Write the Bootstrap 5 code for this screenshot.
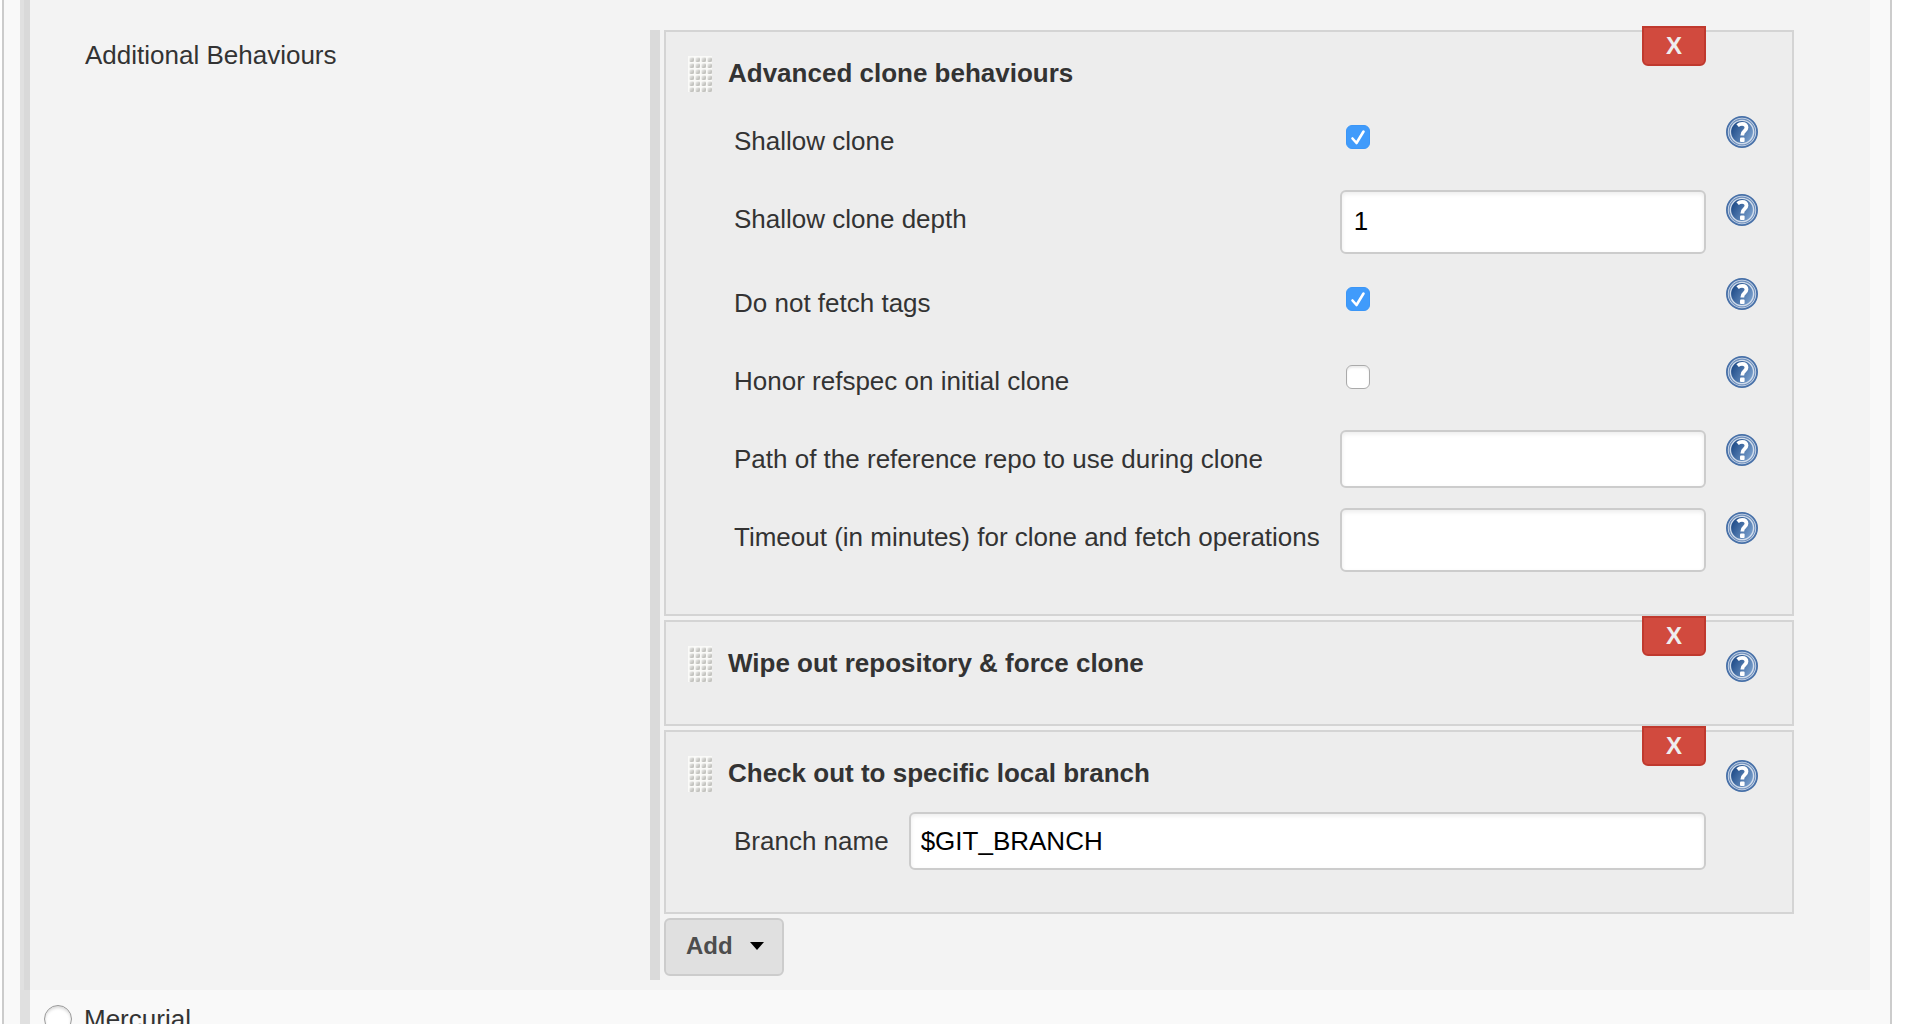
<!DOCTYPE html>
<html lang="en">
<head>
<meta charset="utf-8">
<meta name="viewport" content="width=device-width, initial-scale=1">
<title>Source Code Management</title>
<link href="https://cdn.jsdelivr.net/npm/bootstrap@5.3.0/dist/css/bootstrap.min.css" rel="stylesheet">
<style>
  body { font-family: "Liberation Sans", Arial, sans-serif; font-size: 26px; line-height: 30px; color: #333; background: #fff; }
  .config-frame { margin: 0 14px 0 2px; padding: 0 20px 0 16px; border: solid #ccc; border-width: 0 2px; background: #f9f9f9; }
  .scm-section { border-left: 10px solid #e0e0e0; }
  .scm-panel { margin-left: -6px; padding: 30px 76px 10px 0; border-left: 6px solid #d9d9d9; background: #f3f3f3; display: grid; grid-template-columns: 155fr 286fr; }
  .panel-label { padding: 10px 0 0 55px; }
  .behaviour-list { gap: 4px; padding: 0 0 4px 4px; border-left: 10px solid #dadada; }
  .behaviour { padding: 0 34px 24px 22px; border: 2px solid #d4d4d4; background: #ededed; }
  .behaviour-head { height: 78px; }
  .behaviour-head h2 { margin: 26px 0 0 16px; font-size: 26px; line-height: 30px; font-weight: 700; }
  .grip { width: 24px; height: 36px; margin-top: 24px; }
  .btn-remove { width: 64px; height: 40px; margin: -6px 20px 0 auto; padding: 0; border: 2px solid #c0392e; border-radius: 0 0 6px 6px; background: #d14a3e; color: #eee; font-size: 24px; line-height: 34px; font-weight: 700; }
  .btn-remove:hover { background: #c0392e; border-color: #c0392e; color: #fff; }
  .help { display: block; width: 32px; height: 32px; }
  .help svg { display: block; }
  .help-slot { width: 32px; padding-top: 28px; }
  .field-grid { display: grid; grid-template-columns: max-content minmax(0, 1fr) 32px; column-gap: 20px; padding-left: 46px; }
  .field-grid label { padding-top: 16px; min-height: 78px; }
  .field-grid .help { margin-top: 6px; }
  .text-field { display: block; width: 100%; height: 58px; margin: 2px 0 18px; padding: 0 10px; border: 2px solid #ccc; border-radius: 6px; background: #fff; color: #000; box-shadow: inset 0 2px 4px rgba(0,0,0,.08); }
  .text-field.tall { height: 64px; padding: 0 12px 2px; }
  .tick { appearance: none; display: block; width: 24px; height: 24px; margin: 15px 0 0 6px; border: 1px solid #aaa; border-radius: 6px; background: #fff; box-shadow: inset 0 2px 2px rgba(0,0,0,.08); }
  .tick:checked { border-color: #3b96f7; box-shadow: none; background: #409bfb url("data:image/svg+xml,%3Csvg xmlns='http://www.w3.org/2000/svg' viewBox='0 0 22 22'%3E%3Cpath d='M5.500 12.500l4 4.500L16.500 5.500' fill='none' stroke='%23fff' stroke-width='2.600' stroke-linecap='round' stroke-linejoin='round'/%3E%3C/svg%3E") center / 22px 22px; }
  .btn-add { width: 120px; height: 58px; padding: 0 18px 2px 20px; border: 2px solid #ccc; border-radius: 6px; background: #e0e0e0; color: #4d4d4d; font-size: 24px; line-height: 30px; font-weight: 700; }
  .scm-option { gap: 12px; padding: 14px 0 14px 14px; }
  .scm-option input { appearance: none; width: 28px; height: 28px; margin: 0; border: 1px solid #999; border-radius: 50%; background: #fff; box-shadow: inset 0 2px 3px rgba(0,0,0,.15); }
</style>
<script src="https://cdn.jsdelivr.net/npm/bootstrap@5.3.0/dist/js/bootstrap.bundle.min.js"></script>
</head>
<body class="vh-100 overflow-hidden">

<svg width="0" height="0" class="position-absolute" aria-hidden="true">
  <defs>
    <linearGradient id="helpFill" x1="0" y1="0.200" x2="1" y2="0.800">
      <stop offset="0.100" stop-color="#1d4a87"/><stop offset="1" stop-color="#86abd6"/>
    </linearGradient>
    <linearGradient id="bump" x1="0" y1="0" x2="1" y2="1">
      <stop offset="0" stop-color="#f2f2f0"/><stop offset="0.700" stop-color="#c2c2be"/><stop offset="1" stop-color="#d2d2ce"/>
    </linearGradient>
    <pattern id="bumps" width="6" height="6" patternUnits="userSpaceOnUse">
      <rect width="6" height="6" fill="#fafaf8"/><rect x="1.500" y="1.500" width="4.500" height="4.500" rx="1" fill="url(#bump)"/>
    </pattern>
    <symbol id="grip" viewBox="0 0 24 36"><rect width="24" height="36" fill="url(#bumps)"/></symbol>
    <symbol id="help" viewBox="0 0 32 32">
      <circle cx="16" cy="16" r="15.100" fill="#d3deec" stroke="#4770a8" stroke-width="1.800"/>
      <circle cx="16" cy="16" r="12.800" fill="url(#helpFill)" stroke="#6f8fbc" stroke-width="1.200"/>
      <circle cx="16" cy="16" r="11.600" fill="none" stroke="#d3deec" stroke-width="1.400"/>
      <path d="M11.600 9.600q2-1.700 4.500-1.700 4.400 0 4.400 3.700 0 2-2.200 3.600-2 1.500-2 4.200" fill="none" stroke="#fff" stroke-width="3.800"/>
      <rect x="14" y="21.500" width="4.600" height="4.500" rx="1" fill="#fff"/>
    </symbol>
  </defs>
</svg>

<main class="config-frame min-vh-100">
  <section class="scm-section">
    <div class="scm-panel">
      <div class="panel-label">Additional Behaviours</div>

      <div class="behaviour-list d-flex flex-column">

        <article class="behaviour">
          <header class="behaviour-head d-flex align-items-start">
            <svg class="grip"><use href="#grip"/></svg>
            <h2>Advanced clone behaviours</h2>
            <button type="button" class="btn btn-remove">X</button>
            <div class="help-slot"></div>
          </header>
          <div class="field-grid">
            <label for="shallow">Shallow clone</label>
            <div><input id="shallow" class="tick" type="checkbox" checked></div>
            <a class="help" href="#" aria-label="Help"><svg width="32" height="32"><use href="#help"/></svg></a>

            <label for="depth">Shallow clone depth</label>
            <div><input id="depth" class="text-field tall" type="text" inputmode="numeric" value="1"></div>
            <a class="help" href="#" aria-label="Help"><svg width="32" height="32"><use href="#help"/></svg></a>

            <label for="notags">Do not fetch tags</label>
            <div><input id="notags" class="tick" type="checkbox" checked></div>
            <a class="help" href="#" aria-label="Help"><svg width="32" height="32"><use href="#help"/></svg></a>

            <label for="refspec">Honor refspec on initial clone</label>
            <div><input id="refspec" class="tick" type="checkbox"></div>
            <a class="help" href="#" aria-label="Help"><svg width="32" height="32"><use href="#help"/></svg></a>

            <label for="refrepo">Path of the reference repo to use during clone</label>
            <div><input id="refrepo" class="text-field" type="text"></div>
            <a class="help" href="#" aria-label="Help"><svg width="32" height="32"><use href="#help"/></svg></a>

            <label for="timeout">Timeout (in minutes) for clone and fetch operations</label>
            <div><input id="timeout" class="text-field tall" type="text" inputmode="numeric"></div>
            <a class="help" href="#" aria-label="Help"><svg width="32" height="32"><use href="#help"/></svg></a>
          </div>
        </article>

        <article class="behaviour">
          <header class="behaviour-head d-flex align-items-start">
            <svg class="grip"><use href="#grip"/></svg>
            <h2>Wipe out repository &amp; force clone</h2>
            <button type="button" class="btn btn-remove">X</button>
            <div class="help-slot"><a class="help" href="#" aria-label="Help"><svg width="32" height="32"><use href="#help"/></svg></a></div>
          </header>
        </article>

        <article class="behaviour">
          <header class="behaviour-head d-flex align-items-start">
            <svg class="grip"><use href="#grip"/></svg>
            <h2>Check out to specific local branch</h2>
            <button type="button" class="btn btn-remove">X</button>
            <div class="help-slot"><a class="help" href="#" aria-label="Help"><svg width="32" height="32"><use href="#help"/></svg></a></div>
          </header>
          <div class="field-grid">
            <label for="branch">Branch name</label>
            <div><input id="branch" class="text-field" type="text" value="$GIT_BRANCH"></div>
          </div>
        </article>

        <button type="button" class="btn btn-add d-flex align-items-center justify-content-between">
          Add
          <svg width="14" height="8" viewBox="0 0 14 8"><path d="M0 0h14L7 8z" fill="#000"/></svg>
        </button>
      </div>
    </div>

    <div class="scm-option d-flex align-items-center">
      <input type="radio" id="mercurial" name="scm">
      <label for="mercurial">Mercurial</label>
    </div>
  </section>
</main>
</body>
</html>
